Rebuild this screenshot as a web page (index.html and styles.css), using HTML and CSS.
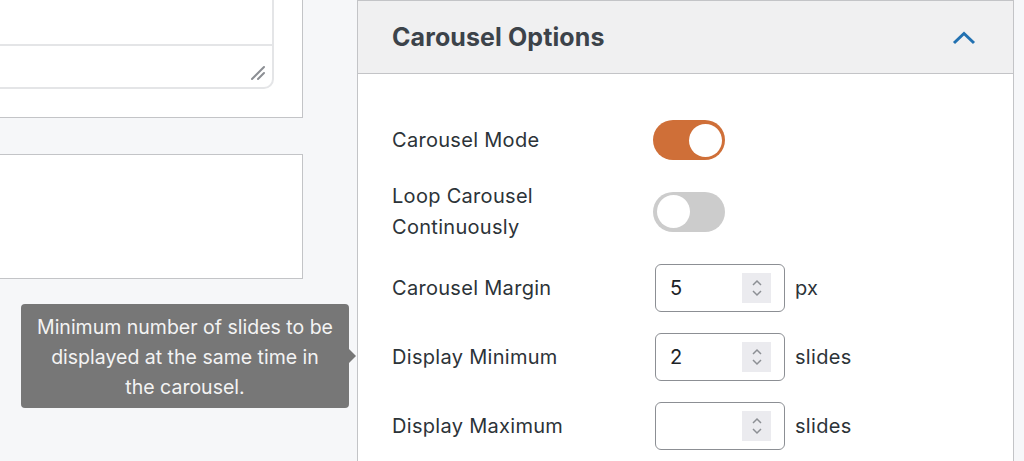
FILE: index.html
```html
<!DOCTYPE html>
<html lang="en">
<head>
<meta charset="utf-8">
<title>Carousel Options</title>
<link rel="stylesheet" href="styles.css">
</head>
<body>
<div class="page">
  <div class="left-col">
    <div class="box box-top">
      <div class="textarea">
        <div class="ta-top"></div>
        <div class="ta-bottom">
          <svg class="resize" width="16" height="16" viewBox="0 0 16 16"><path d="M2 14 L14 2 M8 14 L14 8" stroke="#8c8f94" stroke-width="2" stroke-linecap="round" fill="none"/></svg>
        </div>
      </div>
    </div>
    <div class="box box-second"></div>
  </div>

  <div class="panel">
    <div class="panel-header">
      <h2 class="panel-title">Carousel Options</h2>
      <svg class="chevron" width="24" height="14" viewBox="0 0 24 14"><path d="M2 12 L12 2.5 L22 12" stroke="#2271b1" stroke-width="3" fill="none"/></svg>
    </div>
    <div class="panel-body">
      <div class="row row-toggle">
        <div class="label">Carousel Mode</div>
        <div class="toggle on"><span class="knob"></span></div>
      </div>
      <div class="row row-loop">
        <div class="label">Loop Carousel<br>Continuously</div>
        <div class="toggle off"><span class="knob"></span></div>
      </div>
      <div class="row row-input">
        <div class="label">Carousel Margin</div>
        <div class="number"><span class="value">5</span><span class="spin"><svg width="12" height="22" viewBox="0 0 12 22"><path d="M2 8 L6 4 L10 8 M2 14 L6 18 L10 14" stroke="#8c8f94" stroke-width="1.5" fill="none"/></svg></span></div>
        <span class="unit">px</span>
      </div>
      <div class="row row-input">
        <div class="label">Display Minimum</div>
        <div class="number"><span class="value">2</span><span class="spin"><svg width="12" height="22" viewBox="0 0 12 22"><path d="M2 8 L6 4 L10 8 M2 14 L6 18 L10 14" stroke="#8c8f94" stroke-width="1.5" fill="none"/></svg></span></div>
        <span class="unit">slides</span>
      </div>
      <div class="row row-input">
        <div class="label">Display Maximum</div>
        <div class="number"><span class="value"></span><span class="spin"><svg width="12" height="22" viewBox="0 0 12 22"><path d="M2 8 L6 4 L10 8 M2 14 L6 18 L10 14" stroke="#8c8f94" stroke-width="1.5" fill="none"/></svg></span></div>
        <span class="unit">slides</span>
      </div>
    </div>
  </div>

  <div class="tooltip">Minimum number of slides to be displayed at the same time in the carousel.</div>
</div>
</body>
</html>
```

FILE: styles.css
```css
* { box-sizing: border-box; }
html, body { margin: 0; padding: 0; }
body {
  background: #f6f7f9;
  font-family: Inter, "Liberation Sans", Arial, sans-serif;
  color: #2c3338;
  width: 1024px;
  height: 461px;
  overflow: hidden;
}
.page {
  position: relative;
  display: flex;
  align-items: flex-start;
  height: 461px;
}
.left-col {
  width: 357px;
  flex-shrink: 0;
  display: flex;
  flex-direction: column;
}
.box {
  width: 303px;
  background: #fff;
  border: 1px solid #c3c4c7;
  border-left: none;
}
.box-top {
  height: 118px;
  border-top: none;
  padding: 0 28px 28px 0;
}
.textarea {
  height: 89px;
  border: 2px solid #e4e5e7;
  border-top: none;
  border-left: none;
  border-bottom-right-radius: 10px;
  display: flex;
  flex-direction: column;
}
.ta-top {
  height: 46px;
  border-bottom: 2px solid #e4e5e7;
}
.ta-bottom {
  flex: 1;
  display: flex;
  justify-content: flex-end;
  align-items: flex-end;
  padding: 0 6px 6px 0;
}
.box-second {
  margin-top: 36px;
  height: 125px;
}

.panel {
  width: 657px;
  flex-shrink: 0;
  background: #fff;
  border: 1px solid #c3c4c7;
  border-bottom: none;
  height: 461px;
}
.panel-header {
  height: 73px;
  background: #f0f0f1;
  border-bottom: 1px solid #c3c4c7;
  display: flex;
  align-items: center;
  justify-content: space-between;
  padding: 0 37px 0 34px;
}
.panel-title {
  margin: 0;
  font-size: 25px;
  font-weight: 700;
  color: #3c434a;
  letter-spacing: 0.1px;
}
.chevron { margin-top: 2px; }

.panel-body {
  padding: 46px 34px 0 34px;
  display: flex;
  flex-direction: column;
  gap: 21px;
}
.row {
  display: flex;
  align-items: center;
}
.label {
  width: 261px;
  flex-shrink: 0;
  font-size: 20px;
  line-height: 31px;
  letter-spacing: 0.3px;
  color: #2c3338;
}
.row-toggle { height: 40px; }
.row-loop { height: 62px; }
.row-input { height: 48px; }

.toggle {
  width: 72px;
  height: 40px;
  border-radius: 20px;
  display: flex;
  align-items: center;
  padding: 0 3.5px;
}
.toggle.on { background: #cf6f38; justify-content: flex-end; }
.toggle.off { background: #cccccc; justify-content: flex-start; margin-top: -1px; }
.knob {
  width: 33px;
  height: 33px;
  border-radius: 50%;
  background: #fff;
}

.number {
  margin-left: 2px;
  width: 130px;
  height: 48px;
  border: 1px solid #8c8f94;
  border-radius: 6px;
  display: flex;
  align-items: center;
  justify-content: space-between;
  padding: 0 13px 0 14px;
}
.value {
  font-size: 20px;
  color: #1d2327;
}
.spin {
  width: 29px;
  height: 30px;
  background: #ebebef;
  display: flex;
  align-items: center;
  justify-content: center;
}
.unit {
  margin-left: 10px;
  font-size: 20px;
  letter-spacing: 0.3px;
  color: #2c3338;
}

.tooltip {
  position: absolute;
  left: 21px;
  top: 304px;
  width: 328px;
  height: 104px;
  background: #777777;
  border-radius: 4px;
  color: #f3f3f3;
  font-size: 19.5px;
  line-height: 30px;
  text-align: center;
  padding: 8px 15px 6px;
}
.tooltip::after {
  content: "";
  position: absolute;
  right: -7px;
  top: 45px;
  border-left: 7px solid #777777;
  border-top: 7px solid transparent;
  border-bottom: 7px solid transparent;
}
```
